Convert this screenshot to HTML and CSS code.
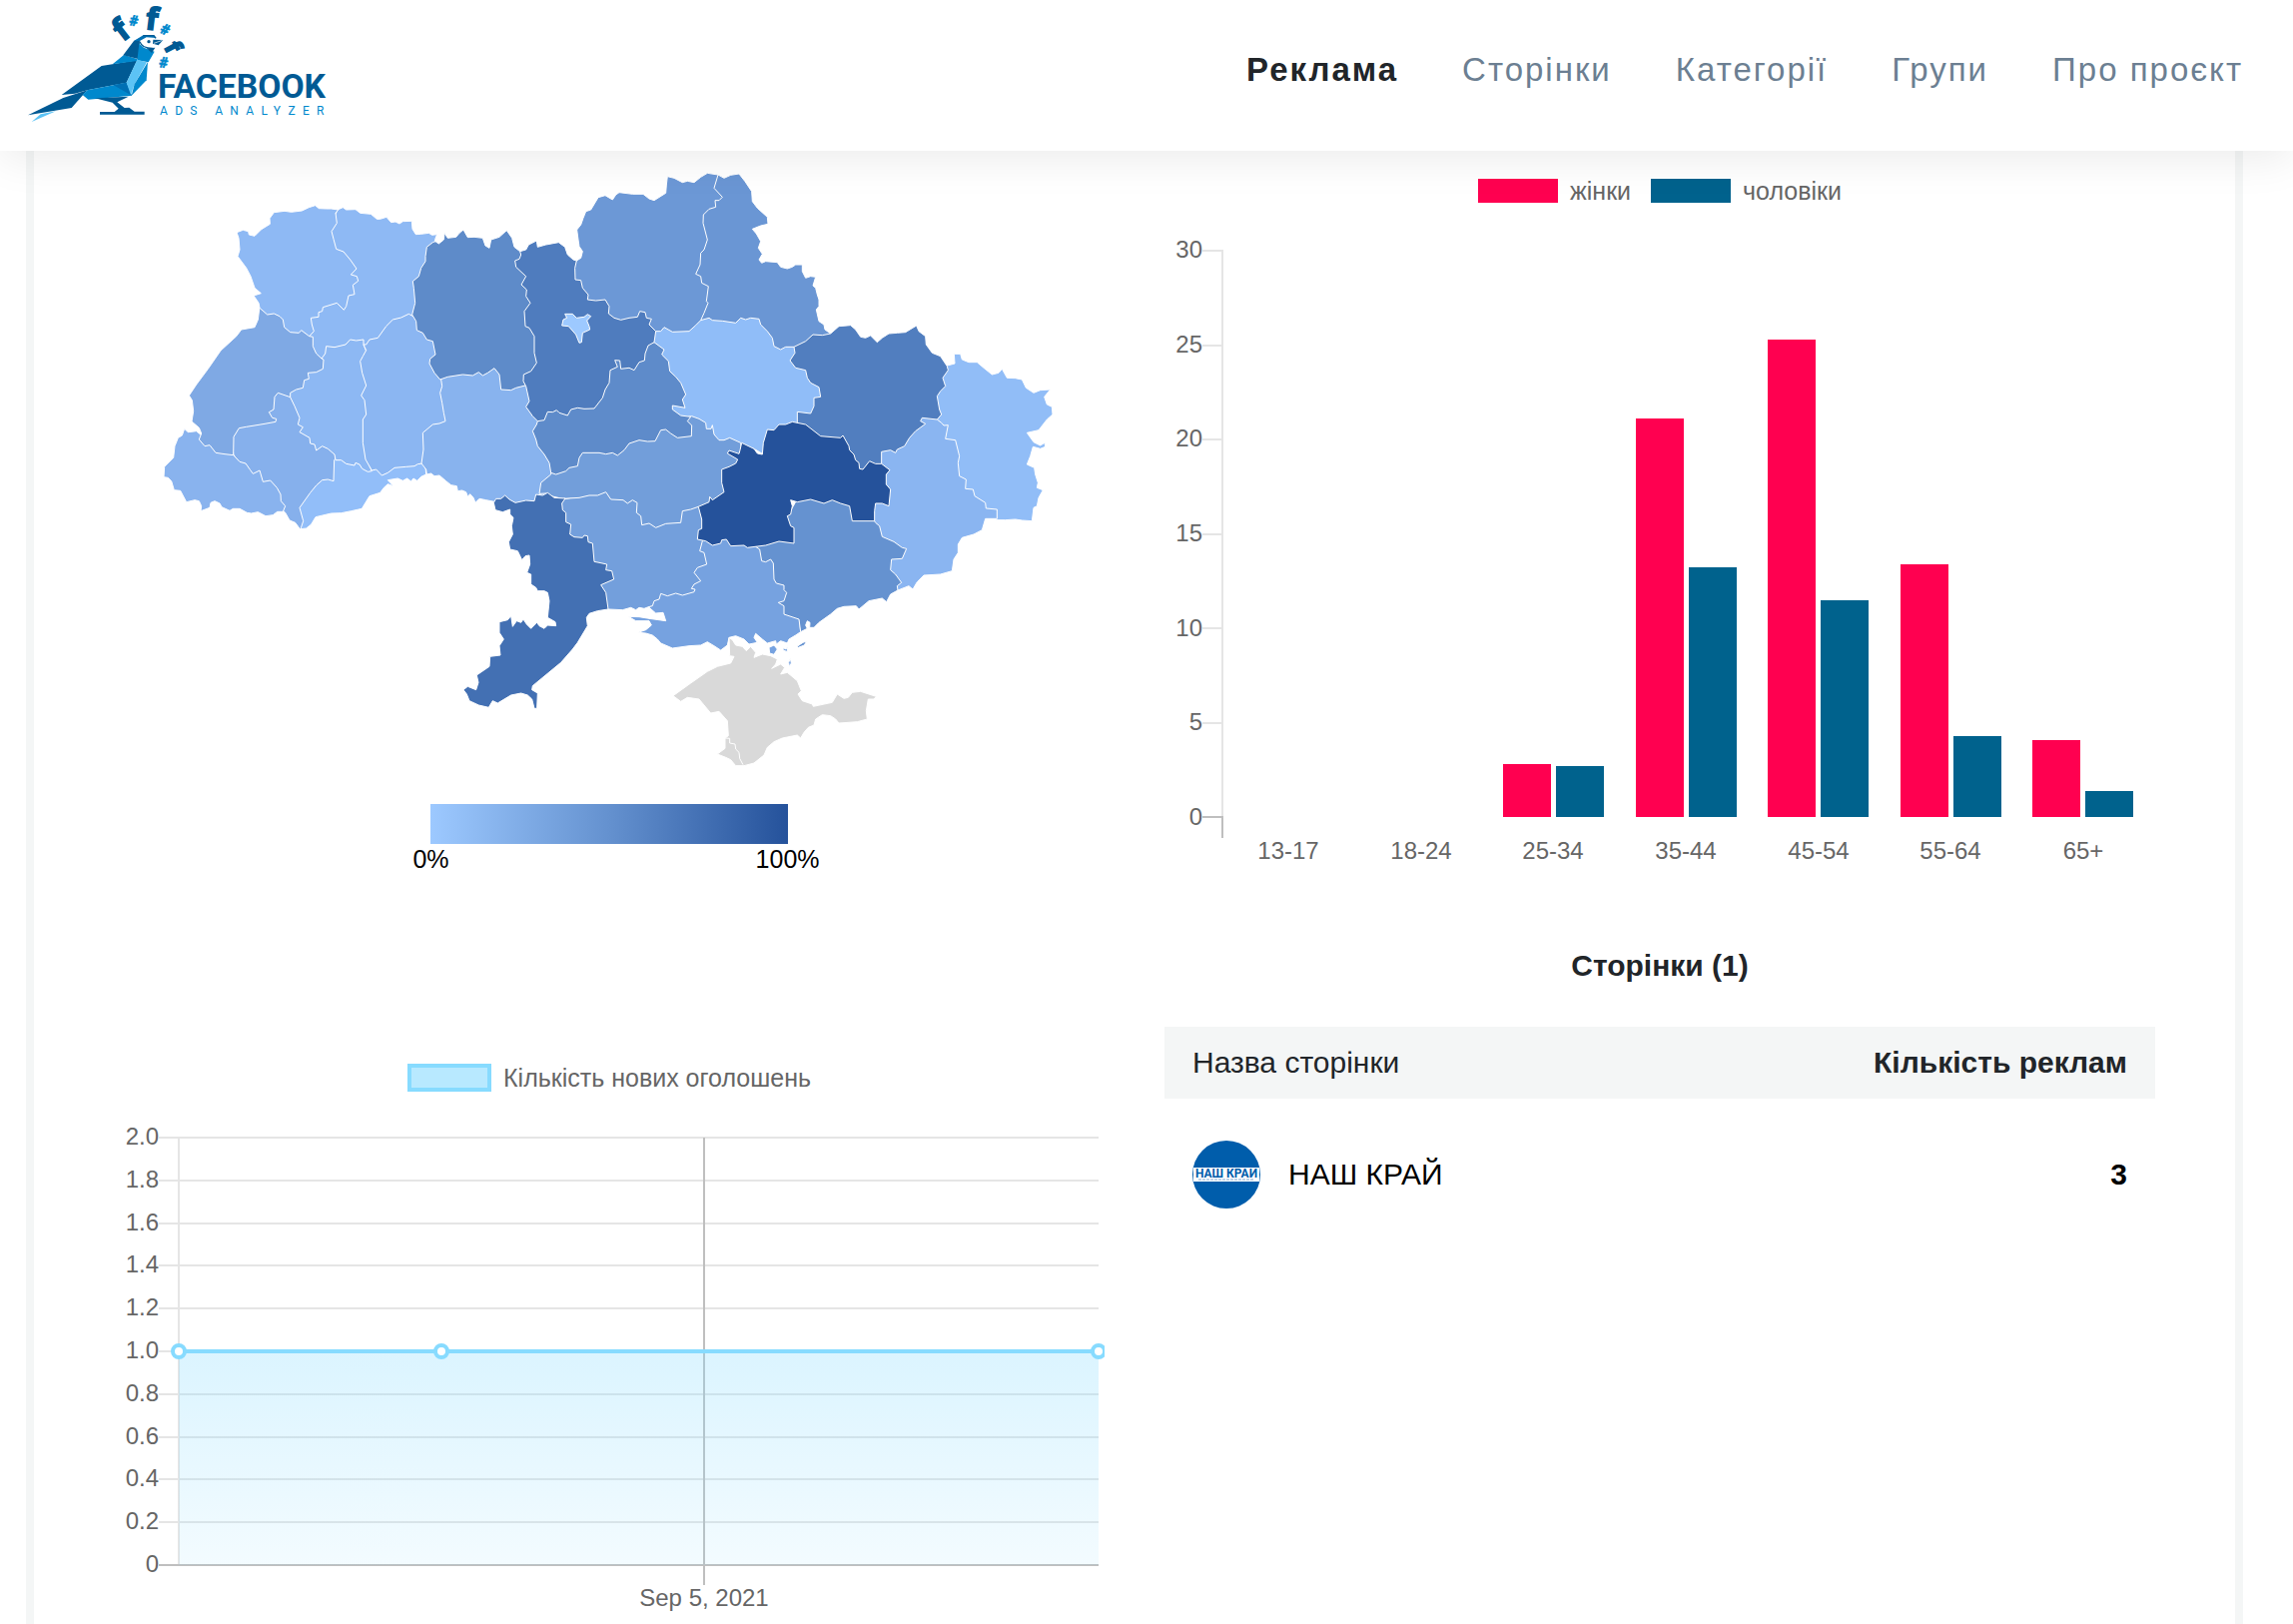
FILE: index.html
```html
<!DOCTYPE html>
<html lang="uk">
<head>
    <meta charset="UTF-8">
    <meta name="viewport" content="width=device-width, initial-scale=1.0">
    <title>Facebook Ads Analyzer</title>
    <link rel="stylesheet" href="styles.css">
</head>
<body>

    <!-- Header -->
    <header class="header">
        <a href="#" class="logo" aria-label="Facebook Ads Analyzer">
            <svg viewBox="0 0 1080 450">
                <!-- tail and wing -->
                <polygon fill="#5cc3f5" points="95,363 122,340 168,331"/>
                <polygon fill="#005a94" points="84,343 190,291 262,268 215,321"/>
                <polygon fill="#005a94" points="185,282 305,195 412,178 380,245 262,268 225,278"/>
                <!-- neck and body -->
                <polygon fill="#0088cd" points="338,190 372,162 412,174 412,180"/>
                <polygon fill="#005a94" points="370,163 402,120 420,112 418,175"/>
                <polygon fill="#0088cd" points="418,128 432,140 464,152 446,184 412,178"/>
                <polygon fill="#0088cd" points="248,282 262,268 380,245 396,284 265,296"/>
                <polygon fill="#0070b4" points="340,252 380,245 396,284"/>
                <polygon fill="#5cc3f5" points="412,176 441,184 404,250 393,282 380,245"/>
                <polygon fill="#0088cd" points="444,183 440,238 395,284 404,250"/>
                <!-- head -->
                <polygon fill="#0070b4" points="402,120 430,103 462,103 470,111 440,109 420,120"/>
                <path fill="none" stroke="#005a94" stroke-width="4" d="M430,104 462,104 468,112 M420,122 C424,136 436,142 458,142"/>
                <circle cx="447" cy="122" r="5" fill="#005a94"/>
                <polygon fill="#005a94" points="460,116 490,117 476,133 459,128"/>
                <path stroke="#fff" stroke-width="2" d="M462,127 488,118"/>
                <polygon fill="#005a94" points="440,142 466,140 456,156"/>
                <!-- legs -->
                <polygon fill="#005a94" points="285,292 386,287 352,304 374,321 388,320 404,332 434,332 434,341 300,341 300,333 344,333 356,323 338,305"/>
                <!-- letters flying round the head -->
                <g class="logo-f">
                    <text transform="translate(369 123) rotate(-38)">f</text>
                    <text transform="translate(435 84) rotate(7)">f</text>
                    <text class="logo-f-small" transform="translate(492 138) rotate(62)">f</text>
                </g>
                <g class="logo-hash">
                    <text transform="translate(386 72) rotate(10)">#</text>
                    <text transform="translate(478 94) rotate(25)">#</text>
                    <text transform="translate(476 198) rotate(8)">#</text>
                </g>
                <text class="logo-name" x="474" y="291">FACEBOOK</text>
                <text class="logo-sub" x="480" y="341">ADS ANALYZER</text>
            </svg>
        </a>
        <nav class="nav">
            <a href="#" class="active">Реклама</a>
            <a href="#">Сторінки</a>
            <a href="#">Категорії</a>
            <a href="#">Групи</a>
            <a href="#">Про проєкт</a>
        </nav>
    </header>

    <main class="card">
        <div class="row">
            <!-- Map of regions -->
            <section class="col">
                <svg class="map" viewBox="-78 -27 2976 1890">
                    <g>
                        <polygon fill="#8eb9f4" points="594,150 610,143 620,150 648,149 662,160 694,163 712,178 722,178 741,172 755,188 768,186 780,192 790,185 817,184 819,208 829,224 845,223 868,220 878,226 893,224 888,236 886,248 900,400 850,480 700,620 560,620 500,560 500,300 570,200"/>
                        <polygon fill="#86b0ec" points="270,870 270,790 380,780 390,700 415,690 460,690 520,780 600,880 600,960 520,1040 500,1100 481,1109 467,1090 450,1083 437,1060 350,980"/>
                        <polygon fill="#92bef9" points="584,902 582,965 565,960 548,962 530,978 512,1000 480,1045 491,1085 483,1109 500,1107 515,1095 528,1073 575,1062 605,1061 635,1055 667,1048 690,1010 722,1000 733,985 745,974 762,980 745,962 775,957 790,964 803,957 815,966 822,957 833,964 845,952 860,945 858,920 845,900 800,880 600,880"/>
                        <polygon fill="#8db8f3" points="440,690 490,640 540,600 546,597 557,582 560,560 585,563 618,555 632,540 650,543 672,540 672,555 690,600 690,920 697,935 685,937 668,928 660,915 648,910 645,918 620,913 605,902 588,902 585,885 565,868 548,860 530,873 525,855 512,852 510,835 480,818 490,803 475,795 480,775 465,740 452,713"/>
                        <polygon fill="#8bb6f2" points="680,555 690,540 715,535 740,500 760,480 785,474 808,463 821,470 900,520 960,700 960,800 880,800 880,900 848,912 835,914 825,920 800,922 765,925 745,940 727,948 710,930 697,933 678,900 670,850 670,780 680,765 675,722 665,708 680,678 668,640 662,605 670,590 680,572 672,555"/>
                        <polygon fill="#89b3ee" points="134,808 145,818 170,815 182,825 200,840 281,880 281,887 300,907 318,912 332,932 340,943 360,933 370,967 392,963 412,985 423,1005 424,1025 437,1040 430,1057 413,1057 400,1067 378,1070 355,1058 335,1062 322,1060 300,1048 280,1048 270,1054 246,1043 240,1032 225,1025 213,1030 210,1045 183,1055 185,1040 178,1025 165,1022 140,1028 122,994 103,992 95,965 85,955 72,953 74,922 101,895 105,860 115,835 127,828"/>
                        <polygon fill="#7fa9e4" points="360,440 440,450 505,500 509,530 520,532 520,560 530,582 546,597 552,600 550,628 530,638 505,640 508,658 494,662 490,685 470,690 452,700 452,713 435,707 415,700 405,712 402,750 388,758 398,775 410,778 408,787 375,793 345,798 320,802 298,806 282,832 281,887 255,884 228,880 210,857 195,860 178,840 185,822 178,805 156,786 161,755 157,722 148,708 170,675 205,628 243,573 290,530 305,510 345,503 355,480"/>
                        <polygon fill="#8eb9f4" points="291,218 310,211 326,215 328,225 345,229 365,209 391,193 390,176 403,158 435,154 455,157 487,153 508,143 527,137 538,146 560,147 575,147 596,150 588,160 592,190 576,215 582,238 590,268 612,276 632,300 651,327 634,345 652,350 656,364 640,376 645,404 627,408 620,440 613,451 592,430 550,443 548,455 537,458 537,472 514,475 517,495 523,515 509,530 485,512 478,520 452,518 434,503 430,480 420,470 403,462 383,465 360,445 357,430 342,408 364,401 345,385 333,350 320,325 294,290 300,270 297,235"/>
                    </g>
                    <g transform="translate(780 0)">
                        <polygon fill="#88b3ee" points="125,660 128,680 122,700 128,730 133,760 138,785 120,792 100,795 70,820 72,870 66,912 80,930 82,945 95,942 105,950 120,948 140,965 155,977 172,980 175,995 188,993 200,998 205,1012 212,1004 222,1015 228,1030 240,1018 260,1022 285,1027 350,1050 430,1030 470,960 470,900 440,780 380,660 290,600 130,640"/>
                        <polygon fill="#5e8bc9" points="108,245 118,252 133,240 135,220 145,235 170,232 180,220 192,210 205,233 225,232 250,235 258,258 270,265 275,240 300,232 322,212 338,235 345,262 362,275 440,310 440,600 400,665 378,678 350,685 335,692 305,690 300,645 285,626 265,640 250,648 238,638 220,648 190,645 145,652 122,660 105,640 90,612 92,598 108,585 100,545 82,540 70,520 52,512 50,485 38,465 47,430 43,385 40,365 58,350 65,325 78,305 78,290 82,262 100,248"/>
                        <polygon fill="#6c98d6" points="532,303 545,295 550,275 540,260 537,240 533,210 545,195 552,175 560,155 575,150 597,113 618,107 640,120 650,105 660,98 700,103 732,103 750,117 765,122 800,100 802,75 805,50 825,55 850,68 865,64 885,68 905,52 925,40 957,45 990,60 1000,500 800,560 600,500 500,350"/>
                    </g>
                    <g transform="translate(1500 0)">
                        <polygon fill="#6a96d4" points="237,45 225,85 250,112 240,122 228,122 230,142 210,148 193,165 192,190 205,240 195,270 185,280 183,315 170,343 185,350 188,370 208,380 202,425 207,430 195,460 185,482 300,520 400,600 480,600 560,560 575,522 558,510 555,495 540,485 532,450 540,440 540,420 535,405 530,385 522,378 530,352 515,350 500,355 490,335 490,315 470,315 460,322 445,327 425,322 415,308 380,305 368,310 360,300 370,283 358,265 365,245 352,222 340,208 365,198 387,193 385,172 355,145 340,125 338,95 318,65 300,42 275,46 255,55"/>
                        <polygon fill="#90bdf8" points="50,515 65,515 75,503 100,517 150,515 170,497 185,482 210,475 220,482 250,484 290,490 305,475 320,480 335,475 360,478 365,495 385,515 400,535 405,560 425,570 440,562 465,562 520,600 560,700 520,780 400,880 372,884 345,868 250,860 140,810 80,790 20,640 20,560"/>
                    </g>
                    <g transform="translate(900 780)">
                        <polygon fill="#739fdc" points="370,240 450,225 500,180 640,200 760,200 820,280 820,400 820,500 700,560 635,562 628,563 615,568 600,565 590,572 575,565 550,572 508,570 480,560 440,500 350,300"/>
                    </g>
                    <g transform="translate(780 0)">
                        <polygon fill="#729eda" points="455,940 500,880 700,820 800,780 850,775 878,770 900,778 920,790 922,808 936,808 940,797 945,825 960,842 975,842 992,835 1025,850 1030,900 1000,1040 898,1042 875,1050 850,1055 845,1090 800,1093 770,1105 750,1092 728,1097 725,1070 712,1060 714,1030 700,1022 685,1032 672,1022 635,1020 620,998 595,1008 570,1008 540,1015 490,1018 455,1010 440,1002 420,1003 425,970 455,945"/>
                        <polygon fill="#5e8bca" points="415,785 450,700 600,600 750,550 765,548 795,570 788,585 808,605 812,635 830,652 845,670 860,705 850,720 858,745 820,738 820,750 845,768 875,772 865,785 878,798 877,830 835,835 815,822 800,810 785,812 768,845 745,846 720,842 690,852 675,872 655,888 640,880 620,884 600,880 550,880 540,895 535,920 510,925 500,935 470,945 455,940 450,910 435,885 415,860 410,840 400,815 412,795"/>
                        <polygon fill="#4f7cbe" points="362,275 380,270 388,255 412,243 415,262 440,255 478,248 497,262 505,285 522,300 532,303 527,325 528,360 545,362 550,385 567,405 565,420 590,423 618,420 630,440 628,462 645,475 665,481 690,475 715,472 722,455 738,458 742,475 757,478 750,495 770,515 765,548 747,558 738,582 736,603 720,608 705,632 690,625 665,628 662,603 647,602 655,622 633,632 630,670 618,690 610,715 585,747 555,748 535,745 515,750 505,768 480,760 472,752 460,758 445,757 435,782 415,785 400,770 380,742 390,725 380,680 372,665 373,645 395,635 412,610 405,580 405,530 390,505 378,500 375,455 393,430 380,410 382,390 366,375 380,350 350,322 347,303 360,298 365,285"/>
                        <polygon fill="#9dc9ff" points="497,463 520,463 532,475 555,472 565,464 575,470 563,483 570,500 572,510 550,520 547,548 540,550 530,525 508,500 488,498 492,480 503,475"/>
                    </g>
                    <g transform="translate(900 780)">
                        <polygon fill="#4370b3" points="163,250 170,238 185,238 197,228 210,240 228,250 260,243 285,245 290,225 310,228 325,220 345,235 378,237 368,252 370,272 380,280 380,308 395,315 392,345 405,353 430,355 435,348 445,350 447,368 460,372 465,427 480,430 503,435 500,452 518,455 524,480 485,497 500,520 507,570 475,575 450,583 442,595 445,620 430,645 415,670 400,690 365,730 280,800 278,812 295,822 293,868 285,868 278,840 265,828 245,822 215,828 175,852 160,845 148,865 118,858 90,845 82,825 72,812 85,802 110,812 117,790 112,768 150,742 152,712 183,708 180,680 193,660 180,640 180,608 205,602 215,590 220,622 232,605 245,610 252,600 262,615 275,628 293,610 300,620 315,628 325,618 350,620 348,608 325,595 330,545 325,520 315,515 295,515 290,505 275,495 275,465 263,460 272,435 270,408 258,410 248,422 235,395 212,390 208,368 220,345 217,320 222,295 212,285 212,270 190,278 168,272"/>
                    </g>
                    <g transform="translate(1500 0)">
                        <polygon fill="#91bdf7" points="925,618 948,612 946,583 965,583 970,600 990,608 1015,608 1035,625 1060,645 1080,640 1090,628 1105,655 1130,656 1150,660 1162,685 1185,700 1205,692 1235,690 1217,712 1225,735 1240,742 1242,765 1225,780 1200,812 1165,820 1185,848 1205,858 1218,850 1220,862 1205,868 1183,862 1175,890 1165,915 1187,925 1190,945 1198,970 1195,985 1213,992 1200,1015 1195,1040 1185,1045 1180,1085 1150,1083 1130,1080 1100,1082 1077,1082 1000,1050 930,900 850,760 860,640"/>
                    </g>
                    <g transform="translate(1500 1140)">
                        <polygon fill="#76a2e0" points="195,-5 340,0 340,10 430,60 460,150 480,220 485,278 470,288 450,300 445,312 425,305 412,315 410,305 385,312 370,300 350,283 345,295 355,310 330,315 315,300 290,290 270,295 265,318 245,333 225,320 205,308 185,318 150,320 100,327 65,312 55,300 40,288 20,282 -3,280 20,272 37,258 30,245 -10,245 -32,232 0,233 30,238 80,245 72,220 50,222 28,203 40,200 45,185 60,180 65,163 85,170 110,162 130,168 165,158 168,150 157,148 165,135 185,125 165,100 175,85 203,75 195,40 182,35 190,5"/>
                        <polygon fill="#76a2e0" points="390,325 405,318 415,330 405,346 392,342"/>
                        <polygon fill="#6592d0" points="474,322 492,310 503,306 496,318 478,325"/>
                        <polygon fill="#76a2e0" points="449,370 454,358 457,372 451,382"/>
                        <polygon fill="#76a2e0" points="433,326 441,330 447,320 444,338 432,332"/>
                        <polygon fill="#6592d0" points="350,22 362,30 368,65 380,68 395,60 403,72 405,120 412,132 435,138 435,152 443,160 435,185 418,190 435,200 435,225 480,240 485,278 505,268 500,258 505,245 513,250 512,265 525,265 540,250 575,225 595,208 615,202 652,200 660,210 690,185 730,177 743,188 755,165 777,153 850,20 720,-80 660,-60 660,-130 480,-130 440,-60 440,0 350,10"/>
                    </g>
                    <g transform="translate(1500 0)">
                        <polygon fill="#8ab5f1" points="895,780 908,790 915,798 928,797 920,838 950,842 962,890 958,910 962,950 982,960 980,988 1003,990 1008,1010 1040,1030 1042,1047 1075,1050 1075,1078 1040,1078 1030,1112 1005,1125 970,1135 958,1155 958,1180 945,1200 940,1235 905,1245 855,1248 835,1268 822,1290 810,1280 777,1293 775,1280 788,1270 770,1245 755,1232 758,1200 790,1198 803,1168 790,1165 765,1147 730,1132 722,1100 710,1090 690,1060 700,1000 700,920 728,850 800,800 890,750"/>
                        <polygon fill="#517ebf" points="465,562 500,545 522,525 550,527 575,522 600,500 635,497 650,510 665,532 680,535 695,528 715,548 730,535 750,522 775,520 800,518 833,498 840,515 860,530 862,555 880,580 905,590 925,620 928,632 912,655 920,680 905,695 895,710 902,750 908,765 895,780 850,775 845,785 860,793 830,815 812,835 797,860 775,870 770,880 755,872 728,877 728,913 700,960 600,900 500,830 475,787 475,757 515,762 525,740 525,715 545,712 540,683 515,670 505,655 500,632 470,625 453,603 468,580"/>
                        <polygon fill="#25529b" points="303,872 308,850 345,868 355,882 370,885 373,850 385,810 405,812 420,795 440,795 460,787 500,795 545,830 605,835 612,828 630,860 632,872 645,885 650,902 660,910 662,928 672,930 692,905 710,913 728,913 753,932 742,945 742,975 755,990 750,1040 730,1032 710,1032 707,1055 707,1085 640,1085 632,1040 605,1032 580,1022 555,1032 515,1020 475,1028 455,1022 460,1040 455,1065 445,1070 455,1100 465,1105 465,1152 420,1146 380,1158 325,1165 315,1158 275,1160 262,1140 248,1142 245,1152 220,1158 200,1145 175,1140 178,1112 188,1108 188,1080 178,1042 210,1028 212,1012 220,1022 255,998 248,970 248,930 270,922 290,912 296,900 265,882 270,873 300,883"/>
                    </g>
                    <g transform="translate(1500 1140)">
                        <polygon fill="#d9d9d9" points="270,295 280,302 290,318 310,322 322,335 335,322 350,340 345,355 370,345 395,350 415,360 410,375 398,388 425,375 437,385 425,405 445,400 475,425 487,455 477,465 490,485 520,495 523,502 580,490 595,465 615,478 628,475 640,460 665,457 690,465 712,472 705,480 688,480 682,515 685,540 655,548 600,552 590,540 575,530 550,527 530,540 525,558 508,565 495,580 485,597 475,588 430,597 405,608 385,625 375,648 345,672 315,680 290,680 275,662 260,655 235,645 258,628 258,597 268,590 265,545 240,517 215,522 180,480 145,475 125,487 102,470 155,432 205,397 235,382 275,372 285,352 272,350"/>
                        <polyline fill="none" points="258,597 272,598 272,612 288,615 290,630 300,640 302,658 312,677"/>
                    </g>
                </svg>
                <div class="scale"></div>
                <div class="scale-labels">
                    <span>0%</span>
                    <span>100%</span>
                </div>
            </section>

            <!-- Age and gender -->
            <section class="col">
                <div class="legend legend-age">
                    <span class="legend-item"><i class="swatch swatch-women"></i>жінки</span>
                    <span class="legend-item"><i class="swatch swatch-men"></i>чоловіки</span>
                </div>
                <svg class="chart" viewBox="0 0 992 650">
                    <path class="axis" d="M38,31H58 M38,126H58 M38,220H58 M38,315H58 M38,409H58 M38,504H58 M58,30V598"/>
                    <path class="axis-zero" d="M38,598H58V619"/>
                    <g class="ticks-y">
                        <text x="38" y="38">30</text>
                        <text x="38" y="133">25</text>
                        <text x="38" y="227">20</text>
                        <text x="38" y="322">15</text>
                        <text x="38" y="417">10</text>
                        <text x="38" y="511">5</text>
                        <text x="38" y="606">0</text>
                    </g>
                    <g class="bar-women">
                        <rect x="339" y="545" width="48" height="53"/>
                        <rect x="472" y="199" width="48" height="399"/>
                        <rect x="604" y="120" width="48" height="478"/>
                        <rect x="737" y="345" width="48" height="253"/>
                        <rect x="869" y="521" width="48" height="77"/>
                    </g>
                    <g class="bar-men">
                        <rect x="392" y="547" width="48" height="51"/>
                        <rect x="525" y="348" width="48" height="250"/>
                        <rect x="657" y="381" width="48" height="217"/>
                        <rect x="790" y="517" width="48" height="81"/>
                        <rect x="922" y="572" width="48" height="26"/>
                    </g>
                    <g class="ticks-x">
                        <text x="124" y="640">13-17</text>
                        <text x="257" y="640">18-24</text>
                        <text x="389" y="640">25-34</text>
                        <text x="522" y="640">35-44</text>
                        <text x="655" y="640">45-54</text>
                        <text x="787" y="640">55-64</text>
                        <text x="920" y="640">65+</text>
                    </g>
                </svg>
            </section>
        </div>

        <div class="row">
            <!-- New ads over time -->
            <section class="col">
                <div class="legend legend-ads">
                    <span class="legend-item"><i class="swatch swatch-ads"></i>Кількість нових оголошень</span>
                </div>
                <svg class="chart" viewBox="0 0 992 508">
                    <defs>
                        <linearGradient id="adsFill" x1="0" y1="0" x2="0" y2="1">
                            <stop offset="0" stop-color="#87dbff" stop-opacity="0.3"/>
                            <stop offset="1" stop-color="#87dbff" stop-opacity="0.1"/>
                        </linearGradient>
                    </defs>
                    <path class="axis" d="M45,29H986 M45,72H986 M45,115H986 M45,157H986 M45,200H986 M45,243H986 M45,286H986 M45,329H986 M45,371H986 M45,414H986 M65,29V457"/>
                    <path class="axis-zero" d="M45,457H986 M591,29V477"/>
                    <rect x="65" y="243" width="921" height="214" fill="url(#adsFill)"/>
                    <path class="ads-line" d="M65,243H986"/>
                    <g class="ads-point">
                        <circle cx="65" cy="243" r="6"/>
                        <circle cx="328" cy="243" r="6"/>
                        <circle cx="986" cy="243" r="6"/>
                    </g>
                    <g class="ticks-y">
                        <text x="45" y="36">2.0</text>
                        <text x="45" y="79">1.8</text>
                        <text x="45" y="122">1.6</text>
                        <text x="45" y="164">1.4</text>
                        <text x="45" y="207">1.2</text>
                        <text x="45" y="250">1.0</text>
                        <text x="45" y="293">0.8</text>
                        <text x="45" y="336">0.6</text>
                        <text x="45" y="378">0.4</text>
                        <text x="45" y="421">0.2</text>
                        <text x="45" y="464">0</text>
                    </g>
                    <g class="ticks-x">
                        <text x="591" y="498">Sep 5, 2021</text>
                    </g>
                </svg>
            </section>

            <!-- Pages -->
            <section class="col">
                <h2 class="pages-title">Сторінки (1)</h2>
                <table class="pages">
                    <thead>
                        <tr>
                            <th scope="col">Назва сторінки</th>
                            <th scope="col" class="count">Кількість реклам</th>
                        </tr>
                    </thead>
                    <tbody>
                        <tr>
                            <td>
                                <a href="#" class="page-link">
                                    <svg class="avatar" viewBox="0 0 68 68">
                                        <circle cx="34" cy="34" r="34" fill="#005dab"/>
                                        <path fill="#fff" d="M1,27H67V41H1Z"/>
                                        <text x="34" y="37">НАШ КРАЙ</text>
                                        <path stroke="#7fa9d2" stroke-width="1" stroke-dasharray="3 1" d="M6,39H62"/>
                                    </svg>
                                    НАШ КРАЙ
                                </a>
                            </td>
                            <td class="count">3</td>
                        </tr>
                    </tbody>
                </table>
            </section>
        </div>
    </main>

</body>
</html>
```

FILE: styles.css
```css
* {
    box-sizing: border-box;
}
body {
    margin: 0;
    min-height: 100vh;
    display: flex;
    flex-direction: column;
    font-family: "Liberation Sans", Arial, sans-serif;
    font-size: 30px;
    color: #212529;
    background: #fff;
}
a {
    color: inherit;
    text-decoration: none;
}
svg {
    display: block;
}
.header {
    position: sticky;
    top: 0;
    z-index: 10;
    display: flex;
    justify-content: space-between;
    align-items: center;
    height: 151px;
    padding-right: 50px;
    background: #fff;
    box-shadow: 0 8px 40px rgba(0, 0, 0, 0.08);
}
.logo svg {
    width: 360px;
    overflow: visible;
}
.logo-f text {
    font: 700 92px "Open Sans", sans-serif;
    fill: #005a94;
    stroke: #005a94;
    stroke-width: 5;
}
.logo-f .logo-f-small {
    font-size: 70px;
}
.logo-hash text {
    font: 700 44px Roboto, sans-serif;
    fill: #0088cd;
    stroke: #0088cd;
    stroke-width: 2;
}
.logo-name {
    font: 700 101px Roboto, sans-serif;
    fill: #005a94;
}
.logo-sub {
    font: 400 36px Roboto, sans-serif;
    letter-spacing: 22px;
    fill: #0088cd;
}
.nav {
    display: flex;
    gap: 64px;
    padding-bottom: 12px;
    font-size: 33px;
    letter-spacing: 2px;
    color: #6c7f92;
}
.nav .active {
    font-weight: bold;
    color: #212529;
}
.card {
    flex: 1;
    margin: 0 50px 0 26px;
    padding: 0 50px;
    border: solid #f4f6f6;
    border-width: 0 8px;
}
.row {
    display: flex;
}
.col {
    flex: 1;
    min-width: 0;
    padding: 0 30px;
}

/* map */
.map {
    width: 100%;
}
.map polygon,
.map polyline {
    stroke: #fff;
    stroke-width: 3;
    stroke-linejoin: round;
}
.scale {
    width: 36%;
    height: 40px;
    margin: 24px auto 0;
    background: linear-gradient(to right, #9dc9ff, #6491cf 50%, #25529b);
}
.scale-labels {
    display: flex;
    justify-content: space-between;
    width: 36%;
    margin: 0 auto;
    font-size: 25px;
    line-height: 30px;
    color: #000;
}
.scale-labels span {
    display: flex;
    justify-content: center;
    width: 0;
}

/* charts */
.chart {
    width: 100%;
}
.chart text {
    font-size: 24px;
    fill: #666;
}
.ticks-y {
    text-anchor: end;
}
.ticks-x {
    text-anchor: middle;
}
.axis,
.axis-zero {
    fill: none;
    stroke: #e5e5e5;
    stroke-width: 2;
}
.axis-zero {
    stroke: #bfbfbf;
}
.legend {
    display: flex;
    justify-content: center;
    gap: 20px;
    font-size: 25px;
    line-height: 28px;
    color: #666;
}
.legend-age {
    padding-top: 26px;
    margin-bottom: 15px;
}
.legend-ads {
    padding-top: 190px;
    margin-bottom: 17px;
}
.legend-item {
    display: flex;
    align-items: center;
    gap: 12px;
}
.swatch {
    width: 80px;
    height: 24px;
}
.swatch-women {
    background: #ff0050;
}
.swatch-men {
    background: #00628d;
}
.swatch-ads {
    width: 84px;
    height: 28px;
    background: #b8e9ff;
    border: 4px solid #87dbff;
}
.bar-women {
    fill: #ff0050;
}
.bar-men {
    fill: #00628d;
}
.ads-line {
    stroke: #87dbff;
    stroke-width: 4;
}
.ads-point {
    fill: #fff;
    stroke: #87dbff;
    stroke-width: 4;
}

/* pages table */
.pages-title {
    margin: 0;
    padding: 75px 0 44px;
    font-size: 30px;
    line-height: 34px;
    text-align: center;
}
.pages {
    width: 100%;
    border-collapse: collapse;
}
.pages th,
.pages td {
    padding: 0 28px;
    text-align: left;
}
.pages th {
    height: 72px;
    font-weight: normal;
    background: #f4f6f6;
}
.pages td {
    padding-top: 42px;
    color: #000;
}
.pages .count {
    font-weight: bold;
    text-align: right;
}
.page-link {
    display: flex;
    align-items: center;
    gap: 28px;
}
.avatar {
    width: 68px;
    height: 68px;
}
.avatar text {
    font: 700 12px Roboto, sans-serif;
    text-anchor: middle;
    fill: #005dab;
}
```
